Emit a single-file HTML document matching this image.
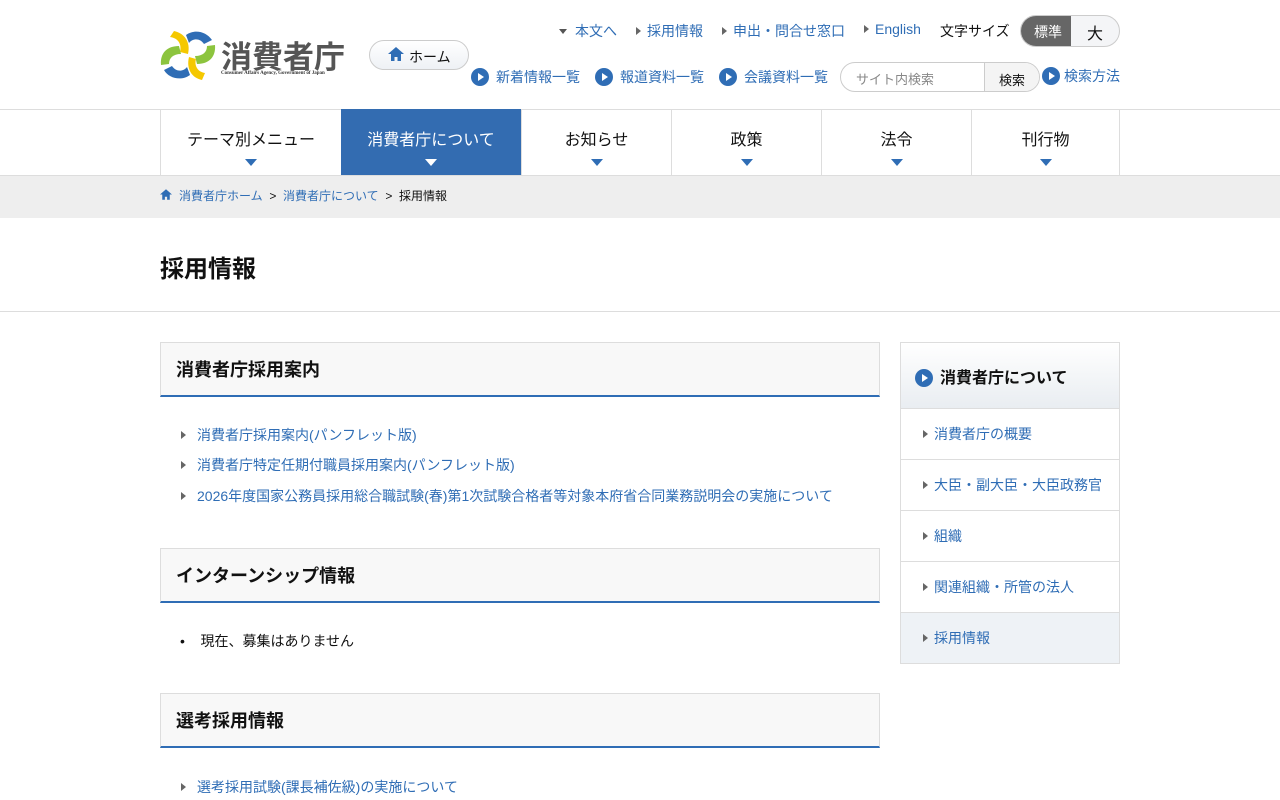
<!DOCTYPE html>
<html><head><meta charset="utf-8"><style>
*{margin:0;padding:0;box-sizing:border-box}
body{width:1280px;height:800px;overflow:hidden;background:#fff;font-family:"Liberation Sans","Noto Sans CJK JP",sans-serif;color:#111;position:relative}
.a{position:absolute;white-space:nowrap}
.lk{color:#2f6db5;font-size:14px}
.tri{display:inline-block;width:0;height:0;border-left:5px solid #666;border-top:4px solid transparent;border-bottom:4px solid transparent;margin-right:6px;vertical-align:1px}
.trid{display:inline-block;width:0;height:0;border-top:5px solid #555;border-left:4px solid transparent;border-right:4px solid transparent;margin-right:8px;vertical-align:2px}
.circ{display:inline-block;width:18px;height:18px;border-radius:50%;background:#2f6db5;position:relative;vertical-align:-4px;margin-right:7px}
.circ:after{content:"";position:absolute;left:7px;top:5px;border-left:6px solid #fff;border-top:4px solid transparent;border-bottom:4px solid transparent}
.nav{position:absolute;top:109px;height:66px;border-left:1px solid #ddd;text-align:center;font-size:16px;padding-top:17px}
.nav i{display:block;margin:9px auto 0;width:0;height:0;border-top:7px solid #2f6db5;border-left:6px solid transparent;border-right:6px solid transparent}
.h2{position:absolute;left:160px;width:720px;height:55px;border:1px solid #ddd;border-bottom:2px solid #2f6db5;background:#f8f8f8;font-size:18px;font-weight:bold;padding:13px 15px}
.li{position:absolute;left:181px;font-size:14px;color:#2f6db5}
.li .tri{margin-right:11px}
.side{position:absolute;left:900px;width:220px;height:51px;border:1px solid #ddd;border-top:none;font-size:14px;color:#2f6db5;padding:15px 0 0 22px}
</style></head><body>
<!-- logo -->
<svg class="a" style="left:160px;top:29px" width="56" height="52" viewBox="0 0 56 52">
<path d="M14 2 C24 4 31 13 28 25 L20 23 C22 15 18 9 10 8Z" fill="#f5c800"/>
<path d="M26 6 C34 0 46 2 52 11 L44 15 C40 9 33 9 29 14Z" fill="#2f6db5"/>
<path d="M55 16 C56 28 49 35 37 35 L35 27 C43 27 47 23 47 17Z" fill="#8cc43e"/>
<path d="M42 51 C32 49 26 40 29 28 L36 30 C34 37 38 43 45 44Z" fill="#f5c800"/>
<path d="M30 46 C22 52 9 50 4 41 L12 37 C16 43 23 43 27 38Z" fill="#2f6db5"/>
<path d="M1 36 C0 24 7 17 19 17 L21 25 C13 25 9 29 9 35Z" fill="#8cc43e"/>
</svg>
<div class="a" style="left:221px;top:32px;font-size:31px;font-weight:bold;color:#555">消費者庁</div>
<div class="a" style="left:221px;top:71px;font-size:5px;font-family:'Liberation Serif',serif;font-weight:bold;color:#333">Consumer Affairs Agency, Government of Japan</div>
<div class="a" style="left:369px;top:40px;width:100px;height:30px;border:1px solid #ccc;border-radius:15px;background:linear-gradient(#fff,#eef1f5);font-size:14px;padding:6px 0 0 39px">ホーム</div>
<svg class="a" style="left:388px;top:47px" width="16" height="14" viewBox="0 0 16 14"><path d="M8 0 L16 7 H13 V14 H9.5 V10 H6.5 V14 H3 V7 H0Z" fill="#2f6db5"/></svg>
<!-- top links -->
<div class="a lk" style="left:559px;top:21px"><span class="trid"></span>本文へ</div>
<div class="a lk" style="left:636px;top:21px"><span class="tri"></span>採用情報</div>
<div class="a lk" style="left:722px;top:21px"><span class="tri"></span>申出・問合せ窓口</div>
<div class="a lk" style="left:864px;top:21px"><span class="tri"></span>English</div>
<div class="a" style="left:940px;top:21px;font-size:14px">文字サイズ</div>
<div class="a" style="left:1020px;top:15px;width:100px;height:32px;border:1px solid #ccc;border-radius:16px;overflow:hidden;background:#f4f5f7">
<div style="position:absolute;left:0;top:0;width:50px;height:32px;background:#666;color:#fff;font-size:14px;padding:6px 0 0 13px">標準</div>
<div style="position:absolute;left:66px;top:4px;font-size:16px">大</div></div>
<div class="a lk" style="left:471px;top:67px"><span class="circ"></span>新着情報一覧</div>
<div class="a lk" style="left:595px;top:67px"><span class="circ"></span>報道資料一覧</div>
<div class="a lk" style="left:719px;top:67px"><span class="circ"></span>会議資料一覧</div>
<div class="a" style="left:840px;top:62px;width:200px;height:30px;border:1px solid #ccc;border-radius:15px;overflow:hidden">
<div style="position:absolute;left:15px;top:6px;font-size:13px;color:#888">サイト内検索</div>
<div style="position:absolute;left:143px;top:0;width:57px;height:30px;border-left:1px solid #ccc;background:#f4f4f4;font-size:13px;padding:7px 0 0 14px">検索</div></div>
<div class="a lk" style="left:1042px;top:66px"><span class="circ" style="margin-right:4px"></span>検索方法</div>
<div class="a" style="left:0;top:109px;width:1280px;border-top:1px solid #ddd"></div>
<!-- nav -->
<div class="nav" style="left:160px;width:181px">テーマ別メニュー<i></i></div>
<div class="nav" style="left:341px;width:180px;background:#336cb1;color:#fff;border-left:none">消費者庁について<i style="border-top-color:#fff"></i></div>
<div class="nav" style="left:521px;width:150px">お知らせ<i></i></div>
<div class="nav" style="left:671px;width:150px">政策<i></i></div>
<div class="nav" style="left:821px;width:150px">法令<i></i></div>
<div class="nav" style="left:971px;width:149px;border-right:1px solid #ddd">刊行物<i></i></div>
<!-- breadcrumb -->
<div class="a" style="left:0;top:175px;width:1280px;height:43px;background:#eee;border-top:1px solid #ddd"></div>
<svg class="a" style="left:160px;top:189px" width="12" height="11" viewBox="0 0 16 14"><path d="M8 0 L16 7 H13 V14 H9.5 V10 H6.5 V14 H3 V7 H0Z" fill="#2f6db5"/></svg>
<div class="a" style="left:179px;top:187px;font-size:12px"><span style="color:#2f6db5">消費者庁ホーム</span>&nbsp;&nbsp;&gt;&nbsp;&nbsp;<span style="color:#2f6db5">消費者庁について</span>&nbsp;&nbsp;&gt;&nbsp;&nbsp;採用情報</div>
<div class="a" style="left:160px;top:249px;font-size:24px;font-weight:bold">採用情報</div>
<div class="a" style="left:0;top:311px;width:1280px;border-top:1px solid #ddd"></div>
<!-- main -->
<div class="h2" style="top:342px">消費者庁採用案内</div>
<div class="li" style="top:425px"><span class="tri"></span>消費者庁採用案内(パンフレット版)</div>
<div class="li" style="top:455px"><span class="tri"></span>消費者庁特定任期付職員採用案内(パンフレット版)</div>
<div class="li" style="top:486px"><span class="tri"></span>2026年度国家公務員採用総合職試験(春)第1次試験合格者等対象本府省合同業務説明会の実施について</div>
<div class="h2" style="top:548px">インターンシップ情報</div>
<div class="a" style="left:180px;top:631px;font-size:14px">•&nbsp;&nbsp;&nbsp;&nbsp;現在、募集はありません</div>
<div class="h2" style="top:693px">選考採用情報</div>
<div class="li" style="top:777px"><span class="tri"></span>選考採用試験(課長補佐級)の実施について</div>
<!-- side -->
<div class="a" style="left:900px;top:342px;width:220px;height:67px;border:1px solid #ddd;background:linear-gradient(#fff,#e9edf1);font-size:16px;font-weight:bold;padding:21px 0 0 14px"><span class="circ"></span>消費者庁について</div>
<div class="side" style="top:409px"><span class="tri"></span>消費者庁の概要</div>
<div class="side" style="top:460px"><span class="tri"></span>大臣・副大臣・大臣政務官</div>
<div class="side" style="top:511px"><span class="tri"></span>組織</div>
<div class="side" style="top:562px"><span class="tri"></span>関連組織・所管の法人</div>
<div class="side" style="top:613px;background:#eef2f6"><span class="tri"></span>採用情報</div>
</body></html>
